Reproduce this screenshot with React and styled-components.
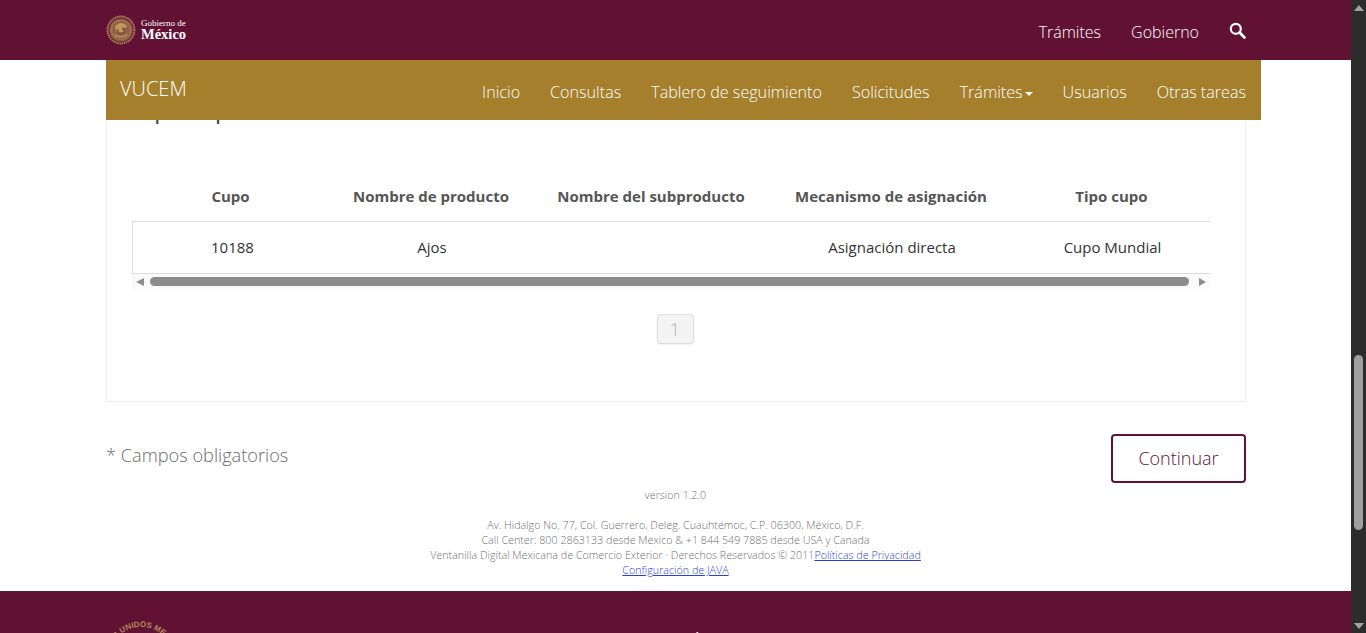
import React from 'react';
import styled, { createGlobalStyle } from 'styled-components';

const wine = '#611232';
const gold = '#a57f2c';
const columns = '197px 204px 236px 244px 197px';

const Global = createGlobalStyle`
    html, body {
        margin: 0;
        height: 633px;
        overflow: hidden;
        background: #fff;
        font-family: "Open Sans", "Liberation Sans", sans-serif;
    }
`;

const Screen = styled.div`
    display: flex;
    height: 633px;
    width: 1366px;
    overflow: hidden;
`;

const Page = styled.div`
    width: 1351px;
    display: flex;
    flex-direction: column;
`;

const TopBar = styled.header`
    height: 60px;
    flex: none;
    background: ${wine};
    padding: 0 105px 0 106px;
    display: flex;
    align-items: center;
    justify-content: space-between;
`;

const Brand = styled.div`
    display: flex;
    align-items: center;
    gap: 5px;
    margin-top: -1px;
`;

const BrandText = styled.div`
    display: flex;
    flex-direction: column;
    color: #fff;
    font-family: "Liberation Serif", serif;
`;

const BrandSmall = styled.span`
    font-size: 9px;
    line-height: 9px;
`;

const BrandBig = styled.span`
    font-size: 14.5px;
    line-height: 13px;
    font-weight: 700;
`;

const TopLinks = styled.nav`
    display: flex;
    align-items: center;
    gap: 30px;
    color: #fff;
    font-size: 16px;
    font-weight: 300;
    margin-top: 4px;
`;

const SearchIcon = styled.svg`
    width: 17px;
    height: 17px;
    margin-top: -3px;
`;

const SubBar = styled.div`
    height: 60px;
    flex: none;
    width: 1155px;
    margin-left: 106px;
    background: ${gold};
    color: #fff;
    display: flex;
    align-items: center;
    justify-content: space-between;
    padding: 0 15px 0 14px;
    box-sizing: border-box;
    position: relative;
    z-index: 2;
`;

const SubTitle = styled.div`
    font-size: 20px;
    font-weight: 300;
    margin-top: -3px;
`;

const SubLinks = styled.nav`
    display: flex;
    gap: 30px;
    font-size: 16.14px;
    font-weight: 300;
    margin-top: 4px;
`;

const Caret = styled.span`
    display: inline-block;
    margin-left: 2px;
    vertical-align: middle;
    border-top: 4px solid #fff;
    border-left: 4px solid transparent;
    border-right: 4px solid transparent;
`;

const Panel = styled.section`
    width: 1140px;
    height: 282px;
    flex: none;
    margin-left: 106px;
    box-sizing: border-box;
    border: 1px solid #eee;
    border-top: 0;
    padding: 0 35px 0 25px;
    overflow: hidden;
    display: flex;
    flex-direction: column;
`;

const PanelTitle = styled.h3`
    margin: -22px 0 0;
    font-size: 18px;
    line-height: 30px;
    font-weight: 600;
    color: #444;
    height: 30px;
`;

const TableHead = styled.div`
    display: grid;
    grid-template-columns: ${columns};
    margin-top: 49px;
    height: 38px;
    align-items: center;
    text-align: center;
    font-size: 15px;
    font-weight: 700;
    color: #555;
`;

const TableRow = styled.div`
    display: grid;
    grid-template-columns: ${columns};
    height: 53px;
    box-sizing: border-box;
    border: 1px solid #ddd;
    border-right: 0;
    padding-bottom: 2px;
    align-items: center;
    text-align: center;
    font-size: 15px;
    color: #333;
    margin-top: 6px;
`;

const Cell = styled.div`
    transform: translateX(${(p) => p.$shift || 0}px);
`;

const Scroll = styled.div`
    height: 15px;
    background: #fafafa;
    display: flex;
    align-items: center;
    gap: 6px;
    padding: 0 4px;
`;

const Track = styled.div`
    flex: 1;
    height: 9px;
    border-radius: 5px;
    background: #8c8c8c;
    margin-right: ${(p) => p.$end || 0}px;
`;

const Tri = styled.span`
    width: 0;
    height: 0;
    border-top: 4.5px solid transparent;
    border-bottom: 4.5px solid transparent;
    border-left: ${(p) => (p.$right ? '7px solid #8c8c8c' : '0')};
    border-right: ${(p) => (p.$right ? '0' : '8px solid #8c8c8c')};
`;

const Pager = styled.div`
    display: flex;
    justify-content: center;
    margin-top: 25px;
    padding-left: 8px;
`;

const PageBtn = styled.div`
    width: 37px;
    height: 30px;
    box-sizing: border-box;
    background: #f4f4f4;
    border: 1px solid #ddd;
    border-radius: 4px;
    box-shadow: 0 1px 2px rgba(0, 0, 0, 0.06);
    color: #aeb4bc;
    font-size: 18px;
    font-weight: 300;
    line-height: 28px;
    text-align: center;
`;

const Actions = styled.div`
    width: 1140px;
    margin-left: 106px;
    display: flex;
    justify-content: space-between;
    flex: none;
    padding-top: 32px;
`;

const Required = styled.div`
    font-size: 18.2px;
    font-weight: 300;
    line-height: 24px;
    margin-top: 9px;
    color: #6b6b6b;
`;

const Continue = styled.button`
    width: 135px;
    height: 49px;
    background: #fff;
    border: 2px solid ${wine};
    border-radius: 4px;
    color: ${wine};
    font-family: inherit;
    font-size: 18px;
    font-weight: 300;
    padding: 0 0 2px;
`;

const Notes = styled.div`
    text-align: center;
    font-size: 10.72px;
    font-weight: 300;
    line-height: 15px;
    color: #707070;
    flex: none;
`;

const Version = styled.div`
    margin-top: 5px;
    margin-bottom: 15px;
`;

const NoteLink = styled.a`
    color: #2b3fd6;
    text-decoration: underline;
`;

const Footer = styled.footer`
    margin-top: 13px;
    flex: 1;
    min-height: 0;
    background: ${wine};
    padding: 23px 0 0 96px;
    overflow: hidden;
    display: flex;
    align-items: flex-start;
`;

const FooterHeading = styled.div`
    margin: 13px 0 0 488px;
    color: #fff;
    font-size: 18px;
    white-space: nowrap;
`;

const Bar = styled.aside`
    width: 15px;
    flex: none;
    background: #2c2c2c;
    display: flex;
    flex-direction: column;
    align-items: center;
`;

const BarUp = styled.span`
    margin-top: 5px;
    width: 0;
    height: 0;
    border-bottom: 6px solid #a3a3a3;
    border-left: 5px solid transparent;
    border-right: 5px solid transparent;
`;

const BarDown = styled.span`
    margin-top: auto;
    margin-bottom: 4px;
    width: 0;
    height: 0;
    border-top: 6px solid #a3a3a3;
    border-left: 5px solid transparent;
    border-right: 5px solid transparent;
`;

const BarThumb = styled.span`
    margin-top: 344px;
    width: 9px;
    height: 175px;
    border-radius: 5px;
    background: #9f9f9f;
`;

// escudo chico, aproximado
const Seal = () => (
    <svg width="30" height="30" viewBox="0 0 30 30">
        <circle cx="15" cy="15" r="13.4" fill="none" stroke="#b0875a" strokeWidth="2" strokeDasharray="1.4 0.7" />
        <circle cx="15" cy="15" r="11.6" fill="#8f5f47" />
        <circle cx="15" cy="15" r="9.4" fill="none" stroke="#b48a5c" strokeWidth="1.2" strokeDasharray="1 1" />
        <path d="M9 12c2-3 4-4 6-4s5 1 6 4l-2 1c-1-1-2-1-3 0l1 4-3 1-2-3-2 1z" fill="#c39a5e" />
        <path d="M8 18c3 4 11 4 14 0l-1 3c-3 2-9 2-12 0z" fill="#b88a55" />
        <path d="M11 14l2 2m3-3l3 3m-8 2h8" stroke="#7a4a3c" strokeWidth="1" fill="none" />
    </svg>
);

const FooterSeal = () => (
    <svg width="90" height="90" viewBox="0 0 90 90" style={{ flex: 'none' }}>
        <path id="ring" d="M45 77a32 32 0 0 1 0-64a32 32 0 0 1 0 64" fill="none" />
        <text fontFamily="Liberation Sans, sans-serif" fontSize="8" fontWeight="700" fill="#b0895a" textAnchor="middle">
            <textPath href="#ring" startOffset="50%">ESTADOS UNIDOS MEXICANOS</textPath>
        </text>
    </svg>
);

export default function App() {
    const links = ['Inicio', 'Consultas', 'Tablero de seguimiento', 'Solicitudes'];
    return (
        <Screen>
            <Global />
            <Page>
                <TopBar>
                    <Brand>
                        <Seal />
                        <BrandText>
                            <BrandSmall>Gobierno de</BrandSmall>
                            <BrandBig>México</BrandBig>
                        </BrandText>
                    </Brand>
                    <TopLinks>
                        <span>Trámites</span>
                        <span>Gobierno</span>
                        <SearchIcon viewBox="0 0 17 17">
                            <circle cx="6.8" cy="6.8" r="5" fill="none" stroke="#fff" strokeWidth="2.2" />
                            <path d="M10.6 10.6L15.4 15.4" stroke="#fff" strokeWidth="2.8" strokeLinecap="round" />
                        </SearchIcon>
                    </TopLinks>
                </TopBar>
                <SubBar>
                    <SubTitle>VUCEM</SubTitle>
                    <SubLinks>
                        {links.map((l) => <span key={l}>{l}</span>)}
                        <span>Trámites<Caret /></span>
                        <span>Usuarios</span>
                        <span>Otras tareas</span>
                    </SubLinks>
                </SubBar>
                <Panel>
                    <PanelTitle>Cupos disponibles</PanelTitle>
                    <TableHead>
                        <Cell>Cupo</Cell>
                        <Cell>Nombre de producto</Cell>
                        <Cell>Nombre del subproducto</Cell>
                        <Cell>Mecanismo de asignación</Cell>
                        <Cell>Tipo cupo</Cell>
                    </TableHead>
                    <TableRow>
                        <Cell $shift={1}>10188</Cell>
                        <Cell>Ajos</Cell>
                        <Cell />
                        <Cell>Asignación directa</Cell>
                        <Cell>Cupo Mundial</Cell>
                    </TableRow>
                    <Scroll>
                        <Tri />
                        <Track $end={4} />
                        <Tri $right />
                    </Scroll>
                    <Pager>
                        <PageBtn>1</PageBtn>
                    </Pager>
                </Panel>
                <Actions>
                    <Required>* Campos obligatorios</Required>
                    <Continue>Continuar</Continue>
                </Actions>
                <Notes>
                    <Version>version 1.2.0</Version>
                    <div>Av. Hidalgo No. 77, Col. Guerrero, Deleg. Cuauhtémoc, C.P. 06300, México, D.F.</div>
                    <div>Call Center: 800 2863133 desde Mexico &amp; +1 844 549 7885 desde USA y Canada</div>
                    <div>Ventanilla Digital Mexicana de Comercio Exterior · Derechos Reservados © 2011<NoteLink>Políticas de Privacidad</NoteLink></div>
                    <div><NoteLink>Configuración de JAVA</NoteLink></div>
                </Notes>
                <Footer>
                    <FooterSeal />
                    <FooterHeading>Enlaces</FooterHeading>
                </Footer>
            </Page>
            <Bar>
                <BarUp />
                <BarThumb />
                <BarDown />
            </Bar>
        </Screen>
    );
}
